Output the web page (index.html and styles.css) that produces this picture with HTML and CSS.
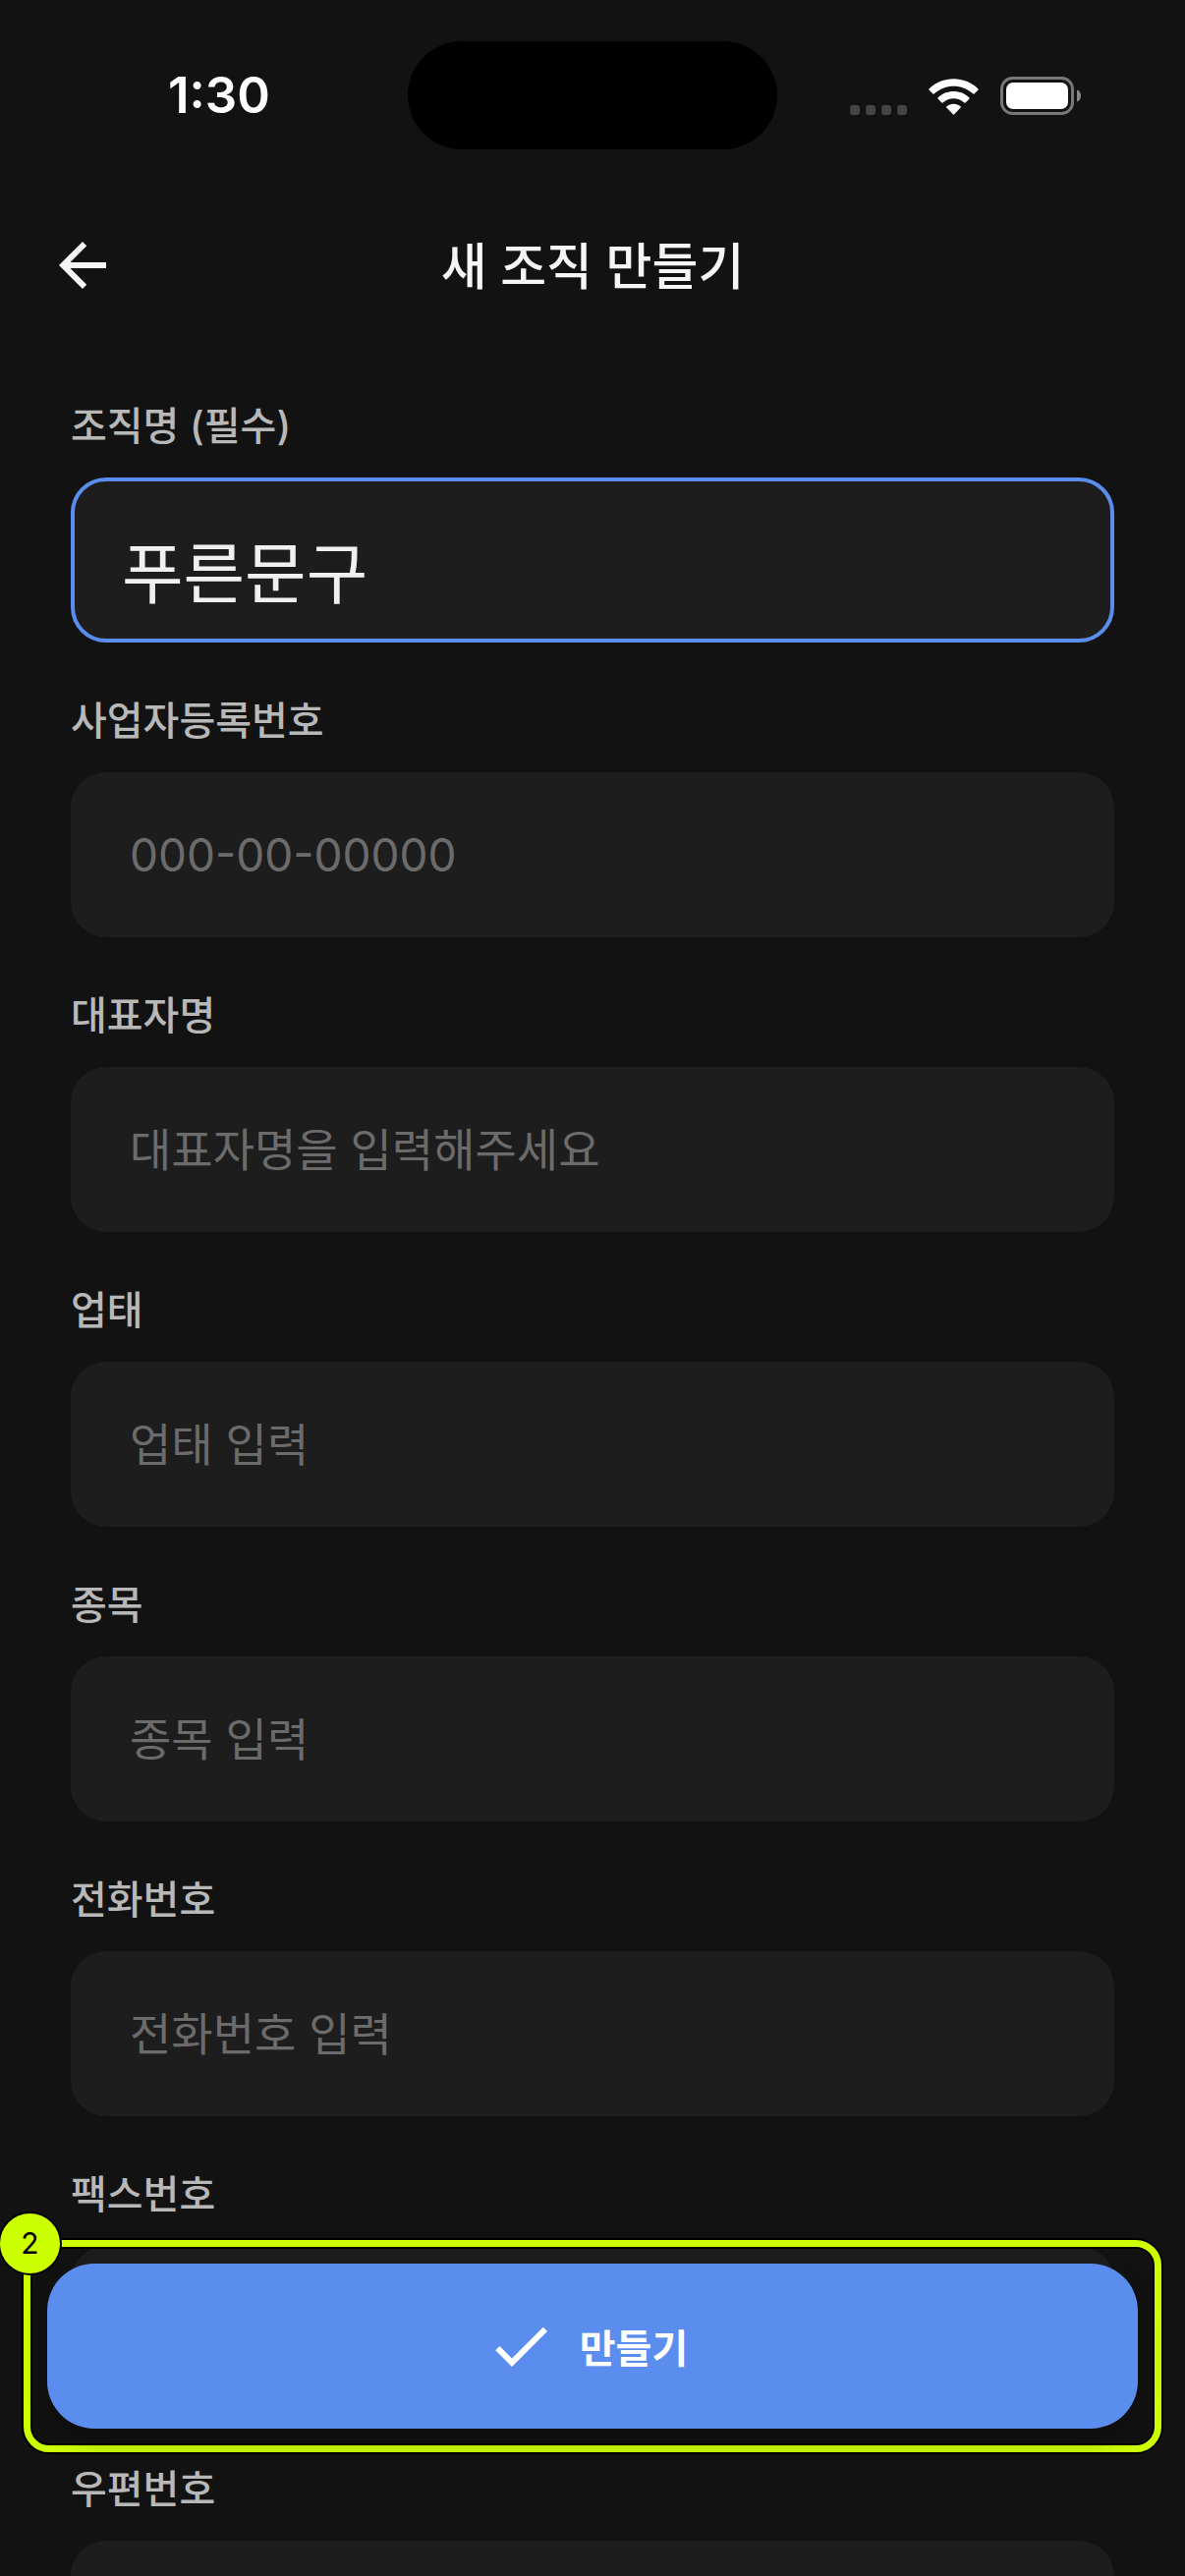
FILE: index.html
```html
<!DOCTYPE html>
<html lang="ko">
<head>
    <meta charset="UTF-8">
    <meta name="viewport" content="width=device-width, initial-scale=1.0">
    <title>새 조직 만들기</title>
    <link rel="stylesheet" href="styles.css">
</head>
<body>
    <div class="status-bar">
        <span class="time">1:30</span>
        <div class="island"></div>
        <div class="status-icons">
            <div class="signal"><i></i><i></i><i></i><i></i></div>
            <svg class="wifi" viewBox="0 0 51 37" fill="#fff">
                <path d="M0.500 10.500C14 -3.200 37 -3.200 50.500 10.500Q51 11 50.500 11.600L46.500 15.500Q46 16 45.400 15.500C34 5 17 5 5.600 15.500Q5 16 4.500 15.500L0.500 11.600Q0 11 0.500 10.500Z"/>
                <path d="M9.500 19.400C18 10.800 33 10.800 41.500 19.400Q42 20 41.500 20.600L37.600 24.500Q37 25 36.400 24.500C30 18.800 21 18.800 14.600 24.500Q14 25 13.400 24.500L9.500 20.600Q9 20 9.500 19.400Z"/>
                <path d="M18.300 28.400C22.300 24.900 28.700 24.900 32.700 28.400Q33.300 29 32.700 29.600L26.200 36.300Q25.500 37 24.800 36.300L18.300 29.600Q17.700 29 18.300 28.400Z"/>
            </svg>
            <svg class="battery" viewBox="0 0 82 39">
                <rect x="1.500" y="1.500" width="72" height="36" rx="11" fill="none" stroke="#777" stroke-width="3"/>
                <rect x="6" y="6" width="63" height="27" rx="7" fill="#fff"/>
                <path d="M78 13.500C81.300 14.500 82 17.500 82 19.500C82 21.500 81.300 24.500 78 25.500Z" fill="#888"/>
            </svg>
        </div>
    </div>
    <header class="app-bar">
        <button class="back-button" type="button" aria-label="뒤로">
            <svg class="icon" viewBox="0 0 24 24"><path d="M20 11H7.830l5.590-5.590L12 4l-8 8 8 8 1.410-1.410L7.830 13H20v-2z"/></svg>
        </button>
        <h1>새 조직 만들기</h1>
    </header>
    <form class="form" id="org-form">
        <div class="field">
            <label for="name">조직명 (필수)</label>
            <input class="active" type="text" id="name" value="푸른문구">
        </div>
        <div class="field">
            <label for="biz-number">사업자등록번호</label>
            <input type="text" id="biz-number" placeholder="000-00-00000">
        </div>
        <div class="field">
            <label for="owner">대표자명</label>
            <input type="text" id="owner" placeholder="대표자명을 입력해주세요">
        </div>
        <div class="field">
            <label for="biz-type">업태</label>
            <input type="text" id="biz-type" placeholder="업태 입력">
        </div>
        <div class="field">
            <label for="biz-item">종목</label>
            <input type="text" id="biz-item" placeholder="종목 입력">
        </div>
        <div class="field">
            <label for="phone">전화번호</label>
            <input type="tel" id="phone" placeholder="전화번호 입력">
        </div>
        <div class="field">
            <label for="fax">팩스번호</label>
            <input type="tel" id="fax">
        </div>
        <div class="field">
            <label for="zip">우편번호</label>
            <input type="text" id="zip">
        </div>
    </form>
    <div class="highlight">
        <span class="step">2</span>
        <button class="submit-button" type="submit" form="org-form">
            <svg class="icon" viewBox="0 0 24 24"><path d="M9 16.170L4.830 12l-1.420 1.410L9 19 21 7l-1.410-1.410z"/></svg>
            만들기
        </button>
    </div>
</body>
</html>
```

FILE: styles.css
```css
* {
    box-sizing: border-box;
}
body {
    margin: 0;
    height: 100vh;
    position: relative;
    display: flex;
    flex-direction: column;
    overflow: hidden;
    font-family: Inter, "Noto Sans CJK KR", sans-serif;
    background-color: #121212;
    color: #f5f5f5;
}
button, input {
    font-family: inherit;
    border: none;
}
.icon {
    width: 72px;
    height: 72px;
    fill: currentColor;
}

/* status bar */
.status-bar {
    display: grid;
    grid-template-columns: 1fr 376px 1fr;
    align-items: center;
    padding: 42px 0 34px;
    flex-shrink: 0;
}
.time {
    padding-left: 171px;
    font-size: 51px;
    line-height: 60px;
    font-weight: 600;
    color: white;
}
.island {
    height: 110px;
    border-radius: 55px;
    background-color: black;
}
.status-icons {
    display: flex;
    justify-content: flex-end;
    align-items: flex-end;
    gap: 22px;
    padding-right: 106px;
}
.signal {
    display: flex;
    gap: 6px;
}
.signal i {
    width: 10px;
    height: 10px;
    border-radius: 3px;
    background-color: #444;
}
.wifi {
    width: 51px;
    height: 37px;
}
.battery {
    width: 82px;
    height: 39px;
}

/* app bar */
.app-bar {
    display: grid;
    grid-template-columns: 72px 1fr 72px;
    align-items: center;
    height: 168px;
    padding: 0 48px;
    flex-shrink: 0;
}
.back-button {
    display: flex;
    padding: 0;
    background: none;
    color: inherit;
    cursor: pointer;
}
h1 {
    margin: 0;
    padding-top: 4px;
    text-align: center;
    font-size: 51px;
    line-height: 60px;
    font-weight: 500;
}

/* form */
.form {
    flex: 1;
    min-height: 0;
    display: flex;
    flex-direction: column;
    gap: 48px;
    padding: 48px 72px;
    overflow-y: auto;
    scrollbar-width: none;
}
.field {
    display: flex;
    flex-direction: column;
    gap: 20px;
    flex-shrink: 0;
}
.field label {
    font-size: 40px;
    line-height: 64px;
    font-weight: 500;
    color: #b8b8b8;
}
.field input {
    width: 100%;
    height: 168px;
    padding: 0 60px;
    border-radius: 36px;
    background-color: #1d1d1d;
    color: #f0f0f0;
    font-size: 46px;
    outline: none;
}
.field input::placeholder {
    color: #6b6b6b;
    opacity: 1;
}
.field input.active {
    padding: 18px 48px 0;
    border: 4px solid #5b8def;
    font-size: 68px;
}

/* floating button */
.highlight {
    position: absolute;
    left: 24px;
    right: 24px;
    bottom: 126px;
    padding: 17px;
    border: 7px solid #ccff00;
    border-radius: 26px;
    box-shadow: 0 0 0 2px black, inset 0 0 0 2px black;
}
.submit-button {
    display: flex;
    justify-content: center;
    align-items: center;
    gap: 24px;
    width: 100%;
    height: 168px;
    padding: 0 12px 0 0;
    border-radius: 48px;
    background-color: #5b8def;
    color: white;
    font-size: 40px;
    font-weight: 700;
    box-shadow: 0 12px 24px rgba(0, 0, 0, 0.25);
    cursor: pointer;
}
.step {
    position: absolute;
    top: -34px;
    left: -31px;
    width: 61px;
    height: 61px;
    border-radius: 50%;
    background-color: #ccff00;
    box-shadow: 0 0 0 2px black;
    color: black;
    font-size: 30px;
    line-height: 61px;
    text-align: center;
}
```
